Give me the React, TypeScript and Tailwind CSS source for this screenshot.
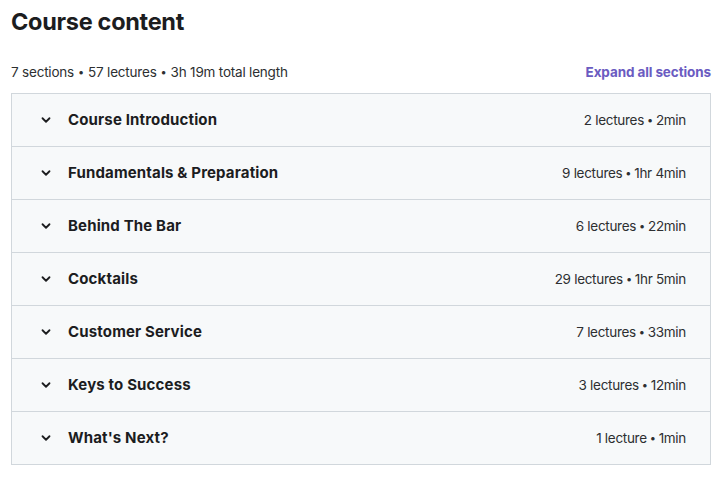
import React from "react";

const sections = [
  ["Course Introduction", "2 lectures • 2min"],
  ["Fundamentals & Preparation", "9 lectures • 1hr 4min"],
  ["Behind The Bar", "6 lectures • 22min"],
  ["Cocktails", "29 lectures • 1hr 5min"],
  ["Customer Service", "7 lectures • 33min"],
  ["Keys to Success", "3 lectures • 12min"],
  ["What's Next?", "1 lecture • 1min"],
];

function Chevron() {
  return (
    <svg width="12" height="12" viewBox="0 0 12 12" fill="none">
      <path d="M2.5 4.25 L6 7.75 L9.5 4.25" stroke="#1c1d1f" strokeWidth="1.8" strokeLinecap="round" strokeLinejoin="round" />
    </svg>
  );
}

function Meta({ text, tight }: { text: string; tight?: boolean }) {
  const parts = text.split(" • ");
  return (
    <span className={`text-[13.5px] text-[#2d2f31] ${tight ? "tracking-[-0.3px]" : "tracking-[-0.2px]"}`}>
      {parts.map((p, i) => (
        <React.Fragment key={i}>
          {i > 0 && <span className={`text-[11px] relative top-[-1px] ${tight ? "mx-[3px]" : "mx-[4px]"}`}>•</span>}
          {p}
        </React.Fragment>
      ))}
    </span>
  );
}

export default function App() {
  return (
    <div className="w-[719px] h-[478px] bg-white text-[#1c1d1f]" style={{ fontFamily: "Inter, 'Noto Sans', sans-serif" }}>
      <div className="pl-[11px] pr-[8px]">
        <h2 className="pt-[7px] text-[23.5px] leading-[30px] font-bold tracking-[-0.3px]">Course content</h2>
        <div className="mt-[25px] flex items-center justify-between h-[20px]">
          <Meta text="7 sections • 57 lectures • 3h 19m total length" />
          <span className="text-[13.5px] font-bold text-[#6a5bc1] tracking-[-0.1px]">Expand all sections</span>
        </div>
        <div className="mt-[11px] w-[700px] border border-[#d1d7dc] bg-[#f7f9fa]">
          {sections.map(([title, meta], i) => (
            <div key={i} className={`flex items-center justify-between pl-[28px] pr-[24px] ${i < sections.length - 1 ? "h-[53px] border-b border-[#d1d7dc]" : "h-[52px]"}`}>
              <div className="flex items-center gap-[16px]">
                <Chevron />
                <span className="text-[15px] font-bold tracking-[0.15px]">{title}</span>
              </div>
              <Meta text={meta} tight />
            </div>
          ))}
        </div>
      </div>
    </div>
  );
}
